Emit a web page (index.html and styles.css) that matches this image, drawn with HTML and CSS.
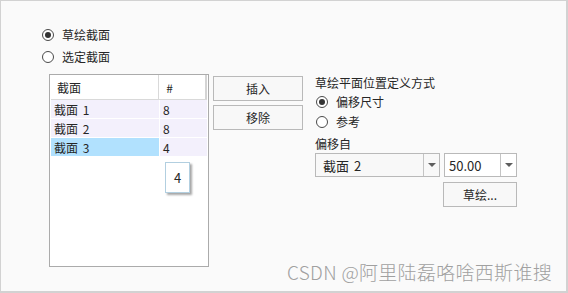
FILE: index.html
```html
<!DOCTYPE html>
<html lang="zh-CN">
<head>
  <meta charset="UTF-8">
  <title>截面</title>
  <link rel="stylesheet" href="styles.css">
</head>
<body>
  <div class="frame">
    <div class="choice">
      <div class="radio-row"><span class="radio checked"></span>草绘截面</div>
      <div class="radio-row"><span class="radio"></span>选定截面</div>
    </div>
    <div class="main">
      <div class="listbox">
        <div class="row head">
          <div class="cell name">截面</div>
          <div class="cell num">#</div>
          <div class="cell edge"></div>
        </div>
        <div class="row item">
          <div class="cell name">截面 1</div>
          <div class="cell num">8</div>
        </div>
        <div class="row item">
          <div class="cell name">截面 2</div>
          <div class="cell num">8</div>
        </div>
        <div class="row item">
          <div class="cell name selected">截面 3</div>
          <div class="cell num">4</div>
        </div>
        <div class="tip">4</div>
      </div>
      <div class="actions">
        <button class="btn">插入</button>
        <button class="btn">移除</button>
      </div>
      <div class="placement">
        <div class="label">草绘平面位置定义方式</div>
        <div class="radio-row small"><span class="radio checked"></span>偏移尺寸</div>
        <div class="radio-row small"><span class="radio"></span>参考</div>
        <div class="label offset">偏移自</div>
        <div class="combos">
          <div class="combo wide"><span class="value">截面 2</span><span class="drop"><i class="arrow"></i></span></div>
          <div class="combo narrow"><span class="value">50.00</span><span class="drop"><i class="arrow"></i></span></div>
        </div>
        <div class="sketch-line">
          <button class="btn sketch">草绘...</button>
        </div>
      </div>
    </div>
    <div class="watermark">CSDN @阿里陆磊咯啥西斯谁搜</div>
  </div>
</body>
</html>
```

FILE: styles.css
```css
body {
  margin: 0;
  font-family: "Noto Sans CJK SC", "Noto Sans", sans-serif;
  font-size: 12px;
  color: #262626;
  background: #fafafa;
}
.frame {
  position: relative;
  width: 568px;
  height: 293px;
  box-sizing: border-box;
  border: 1px solid #d2d2d2;
  border-right-width: 2px;
  border-bottom-width: 2px;
  background: #fafafa;
  padding-top: 23px;
}
.choice {
  padding-left: 41px;
}
.radio-row {
  display: flex;
  align-items: center;
  gap: 8px;
  height: 22px;
  line-height: 22px;
}
.radio-row.small {
  height: 20px;
  line-height: 20px;
}
.radio {
  width: 12px;
  height: 12px;
  box-sizing: border-box;
  border: 1px solid #4a4a4a;
  border-radius: 50%;
  background: #fff;
  display: flex;
  justify-content: center;
  align-items: center;
}
.radio.checked::after {
  content: "";
  width: 6px;
  height: 6px;
  border-radius: 50%;
  background: #333;
}
.main {
  display: flex;
  align-items: flex-start;
  margin-top: 6px;
  padding-left: 48px;
}
.listbox {
  position: relative;
  width: 160px;
  height: 193px;
  box-sizing: border-box;
  border: 1px solid #ababab;
  background: #fff;
  padding: 0 1px 0 1px;
}
.row {
  display: flex;
}
.row.head {
  height: 24px;
  border-bottom: 1px solid #d9d9d9;
  background: #fff;
}
.row.item {
  height: 18px;
  border-bottom: 1px solid #fff;
  background: #f3f0fc;
}
.cell {
  display: flex;
  align-items: center;
  box-sizing: border-box;
}
.cell.name {
  width: 109px;
  padding-left: 3px;
  border-right: 1px solid #fff;
  word-spacing: 2px;
}
.head .cell.name {
  padding-left: 6px;
  border-right: 1px solid #d9d9d9;
}
.cell.num {
  width: 46px;
  padding-left: 3px;
}
.head .cell.num {
  padding-left: 7px;
}
.cell.edge {
  width: 2px;
  background: #d4d4d4;
}
.cell.selected {
  background: #b1e1fe;
}
.tip {
  position: absolute;
  left: 115px;
  top: 87px;
  width: 25px;
  height: 31px;
  box-sizing: border-box;
  border: 1px solid #b2cfe0;
  background: #fff;
  box-shadow: 2px 2px 2px rgba(0, 0, 0, 0.35);
  display: flex;
  justify-content: center;
  align-items: center;
  font-size: 13px;
}
.actions {
  display: flex;
  flex-direction: column;
  gap: 4px;
  margin-left: 4px;
  margin-top: 2px;
}
.btn {
  font-family: inherit;
  font-size: 12px;
  color: #262626;
  width: 90px;
  height: 25px;
  box-sizing: border-box;
  border: 1px solid #b9b9b9;
  background: #f8f8f8;
  padding: 0;
  border-radius: 0;
}
.placement {
  margin-left: 12px;
  width: 202px;
}
.label {
  height: 18px;
  line-height: 18px;
}
.placement .radio-row {
  padding-left: 1px;
}
.label.offset {
  margin-top: 3px;
}
.combos {
  display: flex;
  gap: 4px;
}
.combo {
  display: flex;
  height: 24px;
  box-sizing: border-box;
  border: 1px solid #b9b9b9;
  background: #f8f8f8;
}
.combo.wide {
  width: 125px;
}
.combo.narrow {
  width: 73px;
  background: #fff;
}
.value {
  flex: 1;
  display: flex;
  align-items: center;
  padding-left: 7px;
  font-size: 13px;
  word-spacing: 2px;
}
.combo.narrow .value {
  padding-left: 4px;
}
.drop {
  width: 15px;
  border-left: 1px solid #c4c4c4;
  display: flex;
  justify-content: center;
  align-items: center;
}
.arrow {
  width: 0;
  height: 0;
  border-left: 4px solid transparent;
  border-right: 4px solid transparent;
  border-top: 4px solid #5e5e5e;
}
.sketch-line {
  display: flex;
  justify-content: flex-end;
  margin-top: 5px;
}
.btn.sketch {
  width: 74px;
}
.watermark {
  position: absolute;
  right: 14px;
  bottom: 6px;
  font-size: 19px;
  font-weight: 300;
  letter-spacing: 0.3px;
  color: #a0a0a0;
  white-space: nowrap;
}
```
